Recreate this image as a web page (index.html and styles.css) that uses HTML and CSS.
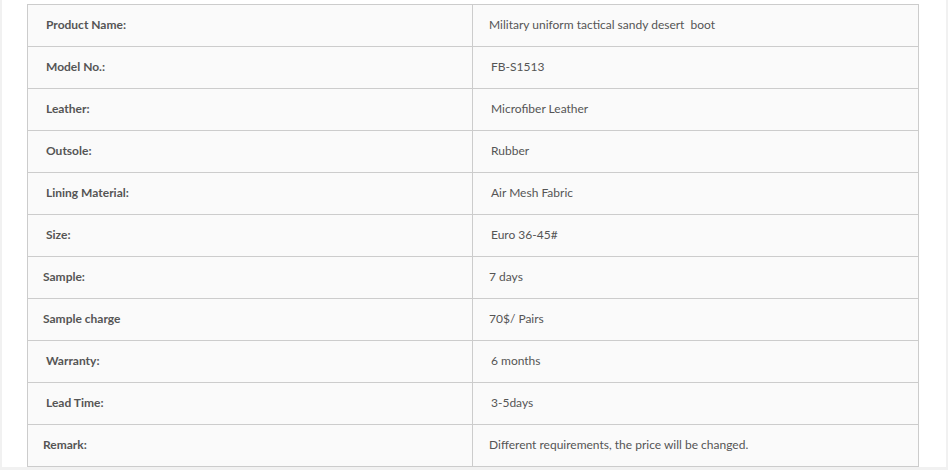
FILE: index.html
```html
<!DOCTYPE html>
<html>
<head>
<meta charset="utf-8">
<link rel="stylesheet" href="styles.css">
</head>
<body>
<div class="page">
  <table class="spec">
    <tbody>
      <tr><td class="label">Product Name:</td><td class="value">Military uniform tactical sandy desert&nbsp; boot</td></tr>
      <tr><td class="label">Model No.:</td><td class="value shift">FB-S1513</td></tr>
      <tr><td class="label">Leather:</td><td class="value shift">Microfiber Leather</td></tr>
      <tr><td class="label">Outsole:</td><td class="value shift">Rubber</td></tr>
      <tr><td class="label">Lining Material:</td><td class="value shift">Air Mesh Fabric</td></tr>
      <tr><td class="label">Size:</td><td class="value shift">Euro 36-45#</td></tr>
      <tr><td class="label tight">Sample:</td><td class="value">7 days</td></tr>
      <tr><td class="label tight">Sample charge</td><td class="value">70$/ Pairs</td></tr>
      <tr><td class="label">Warranty:</td><td class="value shift">6 months</td></tr>
      <tr><td class="label">Lead Time:</td><td class="value shift">3-5days</td></tr>
      <tr><td class="label tight">Remark:</td><td class="value">Different requirements, the price will be changed.</td></tr>
    </tbody>
  </table>
</div>
</body>
</html>
```

FILE: styles.css
```css
html, body {
  margin: 0;
  padding: 0;
}
body {
  background: #f1f1f1;
  font-family: Lato, "Open Sans", sans-serif;
  color: #555;
}
.page {
  width: 944px;
  height: 467px;
  margin-left: 2px;
  background: #fff;
  padding-top: 4px;
  padding-left: 25px;
  box-sizing: border-box;
}
.spec {
  border-collapse: collapse;
  width: 892px;
  table-layout: fixed;
}
.spec td {
  border: 1px solid #cccccc;
  background: #fafafa;
  height: 42px;
  box-sizing: border-box;
  padding: 0 0 2px 0;
  font-size: 12px;
  line-height: 16px;
  vertical-align: middle;
}
.spec td.label {
  width: 445px;
  padding-left: 18px;
  font-weight: 700;
  color: #555;
}
.spec td.label.tight {
  padding-left: 15px;
}
.spec td.value {
  padding-left: 16px;
  color: #555;
}
.spec td.value.shift {
  padding-left: 18px;
}
```
